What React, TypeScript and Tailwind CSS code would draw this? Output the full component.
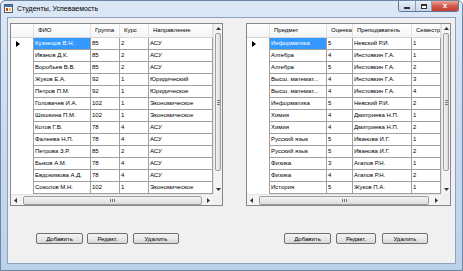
import React from "react";

const font = { fontFamily: '"Liberation Sans", Arial, sans-serif' };

type Col = { title: string; w: number };

function VScroll() {
  return (
    <div className="flex w-[9px] flex-col border-l border-[#e3e3e3] bg-[#f3f3f3]">
      <div className="flex h-[9px] items-center justify-center">
        <svg width="5" height="3" viewBox="0 0 5 3"><path d="M0 3L2.5 0L5 3Z" fill="#333" /></svg>
      </div>
      <div className="mx-[1px] flex h-[138px] items-center justify-center rounded-[2px] border border-[#9e9e9e] bg-gradient-to-r from-[#f4f4f4] to-[#dcdcdc]">
        <div className="flex flex-col gap-[1px]">
          <div className="h-px w-[3px] bg-[#777]" />
          <div className="h-px w-[3px] bg-[#777]" />
          <div className="h-px w-[3px] bg-[#777]" />
        </div>
      </div>
      <div className="flex-1" />
      <div className="flex h-[9px] items-center justify-center">
        <svg width="5" height="3" viewBox="0 0 5 3"><path d="M0 0L2.5 3L5 0Z" fill="#333" /></svg>
      </div>
    </div>
  );
}

function HScroll({ thumbLeft, thumbW }: { thumbLeft: number; thumbW: number }) {
  return (
    <div className="flex h-[11px]">
      <div className="flex flex-1 items-center border-t border-[#e3e3e3] bg-[#f3f3f3]">
        <div className="flex w-[9px] items-center justify-center">
          <svg width="3" height="5" viewBox="0 0 3 5"><path d="M3 0L0 2.5L3 5Z" fill="#333" /></svg>
        </div>
        <div className="flex flex-1 items-center">
          <div style={{ marginLeft: thumbLeft, width: thumbW }} className="flex h-[9px] items-center justify-center gap-[1px] rounded-[2px] border border-[#9e9e9e] bg-gradient-to-b from-[#f4f4f4] to-[#dcdcdc]">
            <div className="h-[3px] w-px bg-[#777]" />
            <div className="h-[3px] w-px bg-[#777]" />
            <div className="h-[3px] w-px bg-[#777]" />
          </div>
        </div>
        <div className="flex w-[9px] items-center justify-center">
          <svg width="3" height="5" viewBox="0 0 3 5"><path d="M0 0L3 2.5L0 5Z" fill="#333" /></svg>
        </div>
      </div>
      <div className="w-[9px] bg-[#f0f0f0]" />
    </div>
  );
}

function Grid({ cols, rows, width, thumbLeft, thumbW }: { cols: Col[]; rows: string[][]; width: number; thumbLeft: number; thumbW: number }) {
  return (
    <div style={{ width }} className="flex h-[183px] flex-col border border-[#828790] bg-white">
      <div className="flex flex-1 overflow-hidden">
        <div className="flex flex-1 flex-col overflow-hidden">
          <div className="flex h-[14px] border-b border-[#d5d5d5] bg-gradient-to-b from-white to-[#f3f4f6]">
            <div className="w-[23px] shrink-0 border-r border-[#e2e2e2]" />
            {cols.map((c, i) => (
              <div key={i} style={{ width: c.w }} className="shrink-0 overflow-hidden whitespace-nowrap border-r border-[#e2e2e2] pl-[4px] text-[6px] leading-[13px] text-black">
                {c.title}
              </div>
            ))}
          </div>
          {rows.map((r, ri) => (
            <div key={ri} className="flex h-[12px]">
              <div className="flex w-[23px] shrink-0 items-center border-r border-[#a0a0a0] pl-[5px]">
                {ri === 0 && (
                  <svg width="4" height="6" viewBox="0 0 4 6"><path d="M0 0L4 3L0 6Z" fill="#000" /></svg>
                )}
              </div>
              {r.map((v, ci) => (
                <div
                  key={ci}
                  style={{ width: cols[ci].w }}
                  className={`shrink-0 overflow-hidden whitespace-nowrap border-b border-r border-[#a0a0a0] pl-[1px] text-[6px] leading-[11px] ${ri === 0 && ci === 0 ? "bg-[#3399ff] text-white" : "text-black"}`}
                >
                  {v}
                </div>
              ))}
            </div>
          ))}
        </div>
        <VScroll />
      </div>
      <HScroll thumbLeft={thumbLeft} thumbW={thumbW} />
    </div>
  );
}

function Btn({ label, w }: { label: string; w: number }) {
  return (
    <div style={{ width: w }} className="flex h-[11px] shrink-0 items-center justify-center rounded-[2px] border border-[#707070] bg-gradient-to-b from-[#f4f4f4] via-[#e9e9e9] to-[#d6d6d6] text-[6px] leading-none text-black">
      {label}
    </div>
  );
}

const leftCols: Col[] = [
  { title: "ФИО", w: 57 },
  { title: "Группа", w: 29 },
  { title: "Курс", w: 29 },
  { title: "Направление", w: 64 },
];

const leftRows = [
  ["Кузнецов В.Н.", "85", "2", "АСУ"],
  ["Иванов Д.К.", "85", "2", "АСУ"],
  ["Воробьев В.В.", "85", "2", "АСУ"],
  ["Жуков Е.А.", "92", "1", "Юридический"],
  ["Петров П.М.", "92", "1", "Юридическое"],
  ["Головачев И.А.", "102", "1", "Экономическое"],
  ["Шишкина П.М.", "102", "1", "Экономическое"],
  ["Котов Г.В.", "78", "4", "АСУ"],
  ["Фалеева Н.П.", "78", "4", "АСУ"],
  ["Петрова З.Р.", "85", "2", "АСУ"],
  ["Быков А.М.", "78", "4", "АСУ"],
  ["Евдокимова А.Д.", "78", "4", "АСУ"],
  ["Соколов М.Н.", "102", "1", "Экономическое"],
];

const rightCols: Col[] = [
  { title: "Предмет", w: 57 },
  { title: "Оценка", w: 26 },
  { title: "Преподаватель", w: 59 },
  { title: "Семестр", w: 29 },
];

const rightRows = [
  ["Информатика", "5", "Невский Р.И.", "1"],
  ["Алгебра", "4", "Инстовкин Г.А.", "1"],
  ["Алгебра", "5", "Инстовкин Г.А.", "2"],
  ["Высш. математ...", "4", "Инстовкин Г.А.", "3"],
  ["Высш. математ...", "4", "Инстовкин Г.А.", "4"],
  ["Информатика", "5", "Невский Р.И.", "2"],
  ["Химия", "4", "Дмитриева Н.П.", "1"],
  ["Химия", "4", "Дмитриева Н.П.", "2"],
  ["Русский язык", "5", "Иванова И.Г.", "1"],
  ["Русский язык", "5", "Иванова И.Г.", "2"],
  ["Физика", "3", "Агапов Р.Н.", "1"],
  ["Физика", "4", "Агапов Р.Н.", "2"],
  ["История", "5", "Жуков П.А.", "1"],
];

export default function App() {
  return (
    <div style={font} className="flex h-[271px] w-[463px] flex-col overflow-hidden rounded-t-[5px] border border-[#6b85a3] bg-gradient-to-b from-[#dce8f6] via-[#c9dbf0] to-[#bcd1ea]">
      {/* title bar */}
      <div className="flex h-[16px] shrink-0 items-start">
        <div className="ml-[3px] mt-[3px] flex h-[9px] w-[9px] flex-col border border-[#5a5a5a] bg-white">
          <div className="h-[2px] bg-[#3a6fc9]" />
          <div className="flex flex-1 gap-px p-px">
            <div className="h-[3px] w-[3px] bg-[#e03a2f]" />
            <div className="h-[3px] w-[2px] bg-[#f0c020]" />
          </div>
        </div>
        <div className="ml-[4px] mt-[3px] text-[7px] leading-[9px] text-black">Студенты, Успеваемость</div>
        <div className="flex-1" />
        <div className="mr-[3px] flex h-[11px] items-stretch overflow-hidden rounded-b-[3px] border border-t-0 border-[#5f7896]">
          <div className="flex w-[17px] items-center justify-center border-r border-[#8aa0ba] bg-gradient-to-b from-[#e8f0f9] to-[#c4d5ea]">
            <div className="mt-[3px] h-[2px] w-[6px] border border-[#333] bg-white" />
          </div>
          <div className="flex w-[16px] items-center justify-center border-r border-[#8aa0ba] bg-gradient-to-b from-[#e8f0f9] to-[#c4d5ea]">
            <div className="h-[5px] w-[6px] border border-[#333] border-t-2 bg-white" />
          </div>
          <div className="flex w-[26px] items-center justify-center bg-gradient-to-b from-[#e9a99c] via-[#d0574a] to-[#c23b2e] text-[8px] font-bold leading-none text-white">
            x
          </div>
        </div>
      </div>
      {/* client */}
      <div className="mx-[6px] flex flex-1 flex-col border border-[#8ca2bd] bg-[#f0f0f0] pl-[2px] pt-[5px]">
        <div className="flex">
          <Grid cols={leftCols} rows={leftRows} width={213} thumbLeft={3} thumbW={179} />
          <div className="w-[23px]" />
          <Grid cols={rightCols} rows={rightRows} width={205} thumbLeft={3} thumbW={170} />
        </div>
        <div className="mt-[27px] flex">
          <div className="ml-[26px] flex w-[210px]">
            <Btn label="Добавить" w={47} />
            <div className="w-[4px]" />
            <Btn label="Редакт." w={41} />
            <div className="w-[5px]" />
            <Btn label="Удалить" w={46} />
          </div>
          <div className="ml-[38px] flex">
            <Btn label="Добавить" w={47} />
            <div className="w-[5px]" />
            <Btn label="Редакт." w={40} />
            <div className="w-[6px]" />
            <Btn label="Удалить" w={46} />
          </div>
        </div>
      </div>
      <div className="h-[6px] shrink-0" />
    </div>
  );
}
